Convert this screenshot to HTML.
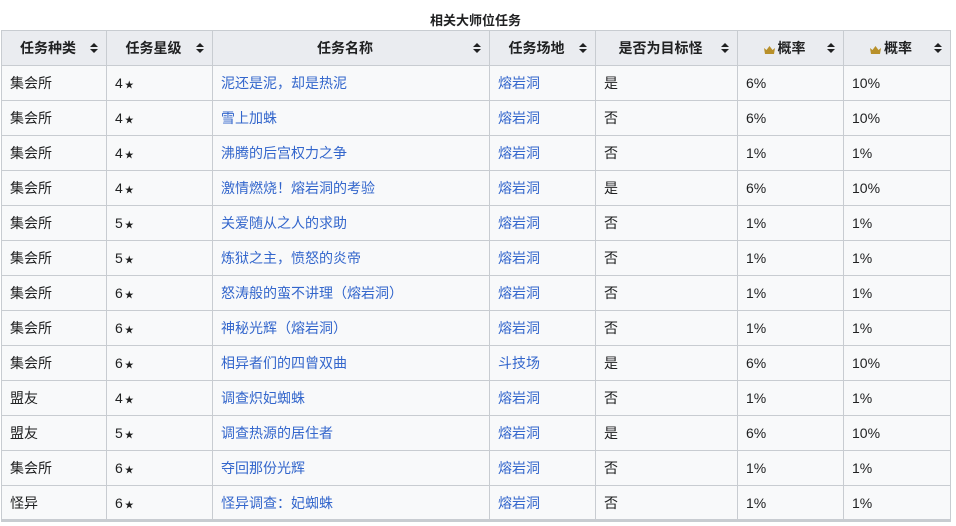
<!DOCTYPE html>
<html><head><meta charset="utf-8"><style>
body{margin:0;background:#fff;font-family:"Liberation Sans","Noto Sans CJK SC",sans-serif;font-size:14px;color:#202122;}
.cap{position:absolute;left:1px;width:949px;top:10px;text-align:center;font-weight:bold;font-size:13px;}
table{position:absolute;left:1px;top:30px;border-collapse:collapse;background:#f8f9fa;border-bottom:3px solid #c8ccd1;}
tr{height:35px;}
td,th{border:1px solid #c8ccd1;height:35px;padding:0 8px;box-sizing:border-box;text-align:left;font-weight:normal;}
th{background:#eaecf0;font-weight:bold;text-align:center;position:relative;padding-right:20px;}
th:after{content:"";position:absolute;right:8px;top:12px;width:0;height:0;border-left:4px solid transparent;border-right:4px solid transparent;border-bottom:4px solid #202122;}
th:before{content:"";position:absolute;right:8px;top:18px;width:0;height:0;border-left:4px solid transparent;border-right:4px solid transparent;border-top:4px solid #202122;}
a{color:#3366cc;text-decoration:none;}
.s{font-size:9px;margin-left:2px;}
.cr{display:inline-block;width:11px;height:8px;vertical-align:-1px;margin-right:3px;}
</style></head><body>
<div class="cap">相关大师位任务</div>
<table>
<colgroup><col style="width:105px"><col style="width:106px"><col style="width:277px"><col style="width:106px"><col style="width:142px"><col style="width:106px"><col style="width:107px"></colgroup>
<tr><th>任务种类</th><th>任务星级</th><th>任务名称</th><th>任务场地</th><th>是否为目标怪</th><th><svg class="cr" viewBox="0 0 11 8"><path d="M0 2L2.5 4L5.5 0L8.5 4L11 2L10 8H1Z" fill="#b8902a"/></svg>概率</th><th><svg class="cr" viewBox="0 0 11 8"><path d="M0 2L2.5 4L5.5 0L8.5 4L11 2L10 8H1Z" fill="#b8902a"/></svg>概率</th></tr>
<tr><td>集会所</td><td>4<span class="s">★</span></td><td><a>泥还是泥，却是热泥</a></td><td><a>熔岩洞</a></td><td>是</td><td>6%</td><td>10%</td></tr>
<tr><td>集会所</td><td>4<span class="s">★</span></td><td><a>雪上加蛛</a></td><td><a>熔岩洞</a></td><td>否</td><td>6%</td><td>10%</td></tr>
<tr><td>集会所</td><td>4<span class="s">★</span></td><td><a>沸腾的后宫权力之争</a></td><td><a>熔岩洞</a></td><td>否</td><td>1%</td><td>1%</td></tr>
<tr><td>集会所</td><td>4<span class="s">★</span></td><td><a>激情燃烧！熔岩洞的考验</a></td><td><a>熔岩洞</a></td><td>是</td><td>6%</td><td>10%</td></tr>
<tr><td>集会所</td><td>5<span class="s">★</span></td><td><a>关爱随从之人的求助</a></td><td><a>熔岩洞</a></td><td>否</td><td>1%</td><td>1%</td></tr>
<tr><td>集会所</td><td>5<span class="s">★</span></td><td><a>炼狱之主，愤怒的炎帝</a></td><td><a>熔岩洞</a></td><td>否</td><td>1%</td><td>1%</td></tr>
<tr><td>集会所</td><td>6<span class="s">★</span></td><td><a>怒涛般的蛮不讲理（熔岩洞）</a></td><td><a>熔岩洞</a></td><td>否</td><td>1%</td><td>1%</td></tr>
<tr><td>集会所</td><td>6<span class="s">★</span></td><td><a>神秘光辉（熔岩洞）</a></td><td><a>熔岩洞</a></td><td>否</td><td>1%</td><td>1%</td></tr>
<tr><td>集会所</td><td>6<span class="s">★</span></td><td><a>相异者们的四曾双曲</a></td><td><a>斗技场</a></td><td>是</td><td>6%</td><td>10%</td></tr>
<tr><td>盟友</td><td>4<span class="s">★</span></td><td><a>调查炽妃蜘蛛</a></td><td><a>熔岩洞</a></td><td>否</td><td>1%</td><td>1%</td></tr>
<tr><td>盟友</td><td>5<span class="s">★</span></td><td><a>调查热源的居住者</a></td><td><a>熔岩洞</a></td><td>是</td><td>6%</td><td>10%</td></tr>
<tr><td>集会所</td><td>6<span class="s">★</span></td><td><a>夺回那份光辉</a></td><td><a>熔岩洞</a></td><td>否</td><td>1%</td><td>1%</td></tr>
<tr><td>怪异</td><td>6<span class="s">★</span></td><td><a>怪异调查：妃蜘蛛</a></td><td><a>熔岩洞</a></td><td>否</td><td>1%</td><td>1%</td></tr>
</table>
</body></html>
